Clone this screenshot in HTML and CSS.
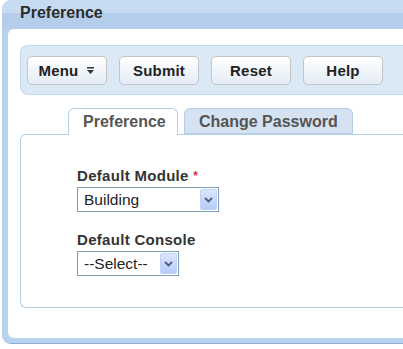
FILE: index.html
```html
<!DOCTYPE html>
<html lang="en">

<head>
  <meta charset="UTF-8">
  <title>Preference</title>
  <link rel="stylesheet" href="styles.css">
</head>

<body>
  <div class="window">
    <div class="window-title">Preference</div>
    <div class="window-body">
      <div class="toolbar">
        <button class="btn">Menu <span class="menu-arrow">
            <svg width="9" height="9" viewBox="0 0 9 9">
              <rect x="1" y="1" width="7" height="1.5" fill="#333" />
              <path d="M1 4 H8 L4.5 8 Z" fill="#333" />
            </svg>
          </span></button>
        <button class="btn">Submit</button>
        <button class="btn">Reset</button>
        <button class="btn">Help</button>
      </div>

      <div class="tabs">
        <div class="tab active">Preference</div>
        <div class="tab">Change Password</div>
      </div>
      <div class="panel">
        <div class="field">
          <label class="label">Default Module <span class="req">*</span></label>
          <div class="select select-wide">
            <span class="select-text">Building</span>
            <span class="select-arrow">
              <svg width="9" height="6" viewBox="0 0 9 6">
                <path d="M1 1 L4.5 4.5 L8 1" fill="none" stroke="#4a5e86" stroke-width="1.8" />
              </svg>
            </span>
          </div>
        </div>
        <div class="field">
          <label class="label">Default Console</label>
          <div class="select select-small">
            <span class="select-text">--Select--</span>
            <span class="select-arrow">
              <svg width="9" height="6" viewBox="0 0 9 6">
                <path d="M1 1 L4.5 4.5 L8 1" fill="none" stroke="#4a5e86" stroke-width="1.8" />
              </svg>
            </span>
          </div>
        </div>
      </div>
    </div>
  </div>
</body>

</html>
```

FILE: styles.css
```css
* {
  padding: 0;
  margin: 0;
  box-sizing: border-box;
}

body {
  width: 403px;
  height: 349px;
  overflow: hidden;
  background: #fff;
  font-family: "Liberation Sans", Arial, sans-serif;
}

.window {
  width: 403px;
  margin-left: 2px;
  padding: 0 0 5px 6px;
  background: #b9d2ee;
  border-radius: 9px 0 0 9px;
  border-bottom: 1px solid #8faed3;
}

.window-title {
  height: 29px;
  margin-left: -6px;
  padding: 4px 0 0 18px;
  font-size: 16px;
  font-weight: bold;
  color: #2b2b2b;
  border-radius: 9px 0 0 0;
  background: linear-gradient(#c6dbf1 0, #c6dbf1 13px, #b4cdea 13px, #b4cdea 100%);
}

.window-body {
  height: 309px;
  background: #fff;
  border-radius: 6px 0 0 6px;
  padding: 16px 0 0 12px;
}

.toolbar {
  display: flex;
  gap: 12px;
  height: 50px;
  padding: 10px 0 0 6px;
  background: #dbe8f6;
  border: 1px solid #c2d7ee;
  border-right: none;
  border-radius: 8px 0 0 8px;
}

.btn {
  width: 80px;
  height: 29px;
  font-family: inherit;
  font-size: 15px;
  font-weight: bold;
  letter-spacing: 0.2px;
  color: #222;
  border: 1px solid #c4c4c4;
  border-radius: 5px;
  background: linear-gradient(#ffffff, #e4ecf7);
  display: flex;
  align-items: center;
  justify-content: center;
  gap: 8px;
}

.menu-arrow {
  display: flex;
}

.tabs {
  display: flex;
  gap: 6px;
  margin: 13px 0 0 48px;
  position: relative;
  z-index: 1;
}

.tab {
  height: 27px;
  padding: 4px 14px 0;
  font-size: 16px;
  font-weight: bold;
  color: #555;
  background: #d5e2f1;
  border: 1px solid #b6cfe9;
  border-bottom: none;
  border-radius: 6px 6px 0 0;
}

.tab.active {
  width: 110px;
  text-align: center;
  background: #fff;
}

.tab:not(.active) {
  height: 26px;
  border-bottom: 1px solid #b6cfe9;
}

.panel {
  margin-top: -1px;
  height: 174px;
  padding: 32px 0 0 56px;
  border: 1px solid #b6cfe9;
  border-right: none;
  border-radius: 6px 0 0 6px;
}

.field {
  margin-bottom: 19px;
}

.label {
  display: block;
  font-size: 15px;
  font-weight: bold;
  letter-spacing: 0.3px;
  color: #333;
  line-height: 18px;
  margin-bottom: 2px;
}

.req {
  color: #e0304a;
  font-size: 12px;
  vertical-align: top;
}

.select {
  display: flex;
  align-items: center;
  height: 25px;
  border: 1px solid #7f9db9;
  padding: 1px;
}

.select-wide {
  width: 142px;
}

.select-small {
  width: 102px;
}

.select-text {
  flex: 1;
  padding-left: 5px;
  font-size: 15.5px;
  color: #222;
}

.select-arrow {
  width: 17px;
  height: 21px;
  display: flex;
  align-items: center;
  justify-content: center;
  border-radius: 2px;
  background: linear-gradient(#dbe5fc, #b7cbf8);
  border: 1px solid #c3d3f8;
}
```
